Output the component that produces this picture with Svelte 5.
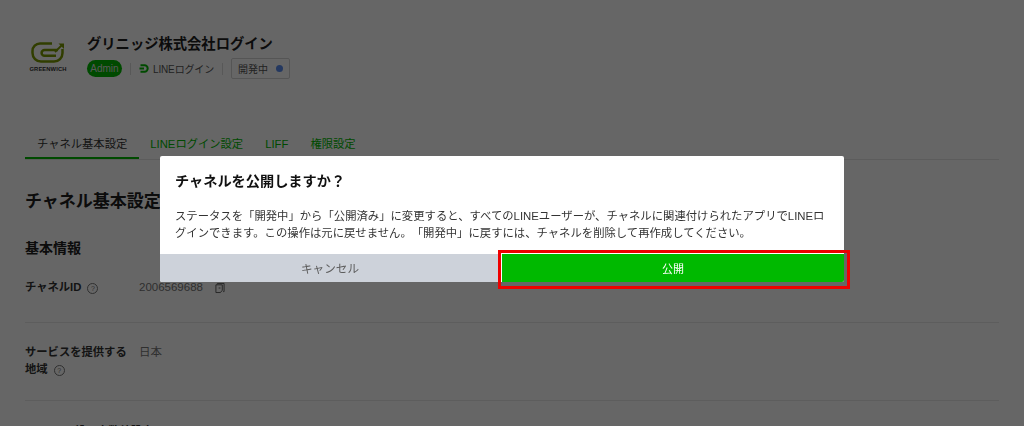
<script>
  const tabs = [
    { label: "チャネル基本設定", active: true },
    { label: "LINEログイン設定" },
    { label: "LIFF" },
    { label: "権限設定" },
  ];
</script>

<div class="page">
  <header class="head">
    <div class="logo">
      <svg width="34" height="21" viewBox="0 0 34 21" fill="none" stroke="#7a9a00" stroke-width="2.500">
        <path d="M21 1.500H9a7.500 7.500 0 0 0-7.500 7.500v2a8.500 8.500 0 0 0 8.500 8.500h13a8.500 8.500 0 0 0 8.500-8.500V7" />
        <path d="M27 8H13.500a2.900 2.900 0 0 0 0 5.800H25" />
        <path d="M24 10 31 3" stroke-width="1.800" />
        <path d="M27.500 1.500h5.500v5.500z" fill="#7a9a00" stroke="none" />
      </svg>
      <span class="logo-text">GREENWICH</span>
    </div>
    <div class="head-main">
      <h1>グリニッジ株式会社ログイン</h1>
      <div class="meta">
        <span class="admin">Admin</span>
        <span class="sep"></span>
        <span class="kind">
          <svg width="10" height="9" viewBox="0 0 10 9" fill="none" stroke="#00b900" stroke-width="2">
            <path d="M1.500 1.300h4a3.200 3.200 0 0 1 0 6.400h-4" />
            <path d="M.5 4.500h4.500" />
          </svg>
          LINEログイン
        </span>
        <span class="sep"></span>
        <span class="status">開発中<i class="dot"></i></span>
      </div>
    </div>
  </header>

  <nav class="tabs">
    {#each tabs as tab}
      <span class="tab" class:active={tab.active}>{tab.label}</span>
    {/each}
  </nav>

  <h2>チャネル基本設定</h2>
  <h3>基本情報</h3>

  <div class="row first">
    <div class="label">チャネルID<span class="help">?</span></div>
    <div class="value">
      2006569688
      <svg class="copy" width="10" height="12" viewBox="0 0 11 12" fill="none" stroke="#555" stroke-width="1">
        <path d="M2.500 2V1h7.500v9H9" />
        <path d="M1 2.500h7v6l-2 2.500H1z" />
        <path d="M4 6h2" />
      </svg>
    </div>
  </div>
  <div class="row">
    <div class="label">サービスを提供する<br />地域<span class="help">?</span></div>
    <div class="value">日本</div>
  </div>
  <div class="row last">
    <div class="label">ー般の大数値設定</div>
  </div>
</div>

<div class="overlay">
  <div class="modal">
    <div class="modal-body">
      <h4>チャネルを公開しますか？</h4>
      <p>ステータスを「開発中」から「公開済み」に変更すると、すべてのLINEユーザーが、チャネルに関連付けられたアプリでLINEログインできます。この操作は元に戻せません。「開発中」に戻すには、チャネルを削除して再作成してください。</p>
    </div>
    <div class="actions">
      <button class="cancel">キャンセル</button>
      <button class="publish">公開</button>
    </div>
  </div>
</div>
<div class="highlight"></div>

<style>
  :global(body) {
    margin: 0;
    background: #fff;
    overflow: hidden;
  }
  .page {
    width: 1024px;
    height: 426px;
    box-sizing: border-box;
    padding: 32px 25px 0;
    overflow: hidden;
    font-family: "Liberation Sans", "Noto Sans CJK JP", sans-serif;
    color: #1e1e1e;
    text-spacing-trim: space-all;
  }
  .head {
    display: flex;
    gap: 16px;
    height: 57px;
  }
  .logo {
    width: 46px;
    display: flex;
    flex-direction: column;
    align-items: center;
    padding-top: 10px;
  }
  .logo-text {
    font-size: 5.800px;
    line-height: 7px;
    font-weight: 700;
    letter-spacing: 0.1px;
    margin-top: 3px;
    color: #333;
  }
  h1 {
    margin: 2px 0 4px;
    font-size: 14.300px;
    line-height: 20px;
    font-weight: 700;
  }
  .meta {
    display: flex;
    align-items: center;
    font-size: 10px;
    color: #555;
    height: 21px;
  }
  .admin {
    background: #00b900;
    color: #ddd;
    border-radius: 9px;
    height: 17px;
    line-height: 17px;
    width: 35px;
    text-align: center;
    font-size: 10px;
  }
  .sep {
    width: 1px;
    height: 12px;
    background: #ddd;
    margin: 0 8px;
  }
  .kind {
    display: flex;
    align-items: center;
    gap: 4px;
    letter-spacing: -0.15px;
  }
  .status {
    display: flex;
    align-items: center;
    width: 59px;
    box-sizing: border-box;
    height: 21px;
    padding-left: 6px;
    border: 1px solid #d5d5d5;
    border-radius: 2px;
    font-size: 10px;
  }
  .dot {
    width: 7px;
    height: 7px;
    border-radius: 50%;
    background: #5b8def;
    margin-left: 8px;
  }
  .tabs {
    display: flex;
    margin-top: 44px;
    border-bottom: 1px solid #e5e5e5;
    height: 26px;
    font-size: 11.300px;
  }
  .tab {
    padding: 0 11px;
    color: #00b900;
    line-height: 22px;
    height: 25px;
  }
  .tab.active {
    color: #333;
    padding: 0 12px;
    border-bottom: 2px solid #00b900;
    height: 24px;
  }
  h2 {
    margin: 30px 0 0;
    font-size: 17px;
    line-height: 24px;
    font-weight: 700;
  }
  h3 {
    margin: 25px 0 0;
    font-size: 14px;
    line-height: 18px;
    font-weight: 700;
  }
  .row {
    display: flex;
    padding: 21px 0 22px;
    border-bottom: 1px solid #e8e8e8;
    font-size: 11.300px;
    line-height: 17px;
  }
  .row.first {
    padding: 22px 0 26px;
  }
  .row.last {
    border-bottom: 0;
    padding: 22px 0 0 38px;
  }
  .label {
    width: 114px;
    font-weight: 700;
    color: #333;
    white-space: nowrap;
  }
  .value {
    color: #777;
    display: flex;
    align-items: center;
    height: 17px;
    font-size: 11.500px;
  }
  .help {
    display: inline-block;
    width: 9px;
    height: 9px;
    line-height: 9px;
    border: 1px solid #777;
    border-radius: 50%;
    font-size: 7px;
    font-weight: 400;
    text-align: center;
    color: #777;
    margin-left: 6px;
  }
  .copy {
    margin-left: 12px;
  }
  .overlay {
    position: fixed;
    inset: 0;
    background: rgba(0, 0, 0, 0.6);
    font-family: "Liberation Sans", "Noto Sans CJK JP", sans-serif;
    text-spacing-trim: space-all;
  }
  .modal {
    position: absolute;
    left: 160px;
    top: 156px;
    width: 684px;
    height: 126px;
    background: #fff;
    display: flex;
    flex-direction: column;
    border-radius: 2px;
    overflow: hidden;
  }
  .modal-body {
    flex: 1;
    padding: 15px 15px 0;
  }
  h4 {
    margin: 0;
    font-size: 14.200px;
    line-height: 20px;
    font-weight: 700;
    color: #111;
  }
  p {
    margin: 17px 0 0;
    font-size: 11.350px;
    line-height: 17px;
    color: #333;
  }
  .actions {
    display: flex;
    height: 28px;
    gap: 2px;
  }
  .actions button {
    border: 0;
    font: inherit;
    font-size: 11.600px;
    padding: 0;
  }
  .cancel {
    flex: 0 0 340px;
    background: #cdd2da;
    color: #5c5c5c;
  }
  .actions .publish {
    flex: 1;
    background: #00b900;
    color: #fff;
    font-size: 11px;
  }
  .highlight {
    position: fixed;
    left: 498px;
    top: 250px;
    width: 352px;
    height: 39px;
    box-sizing: border-box;
    border: 3px solid #ee0000;
  }
</style>
